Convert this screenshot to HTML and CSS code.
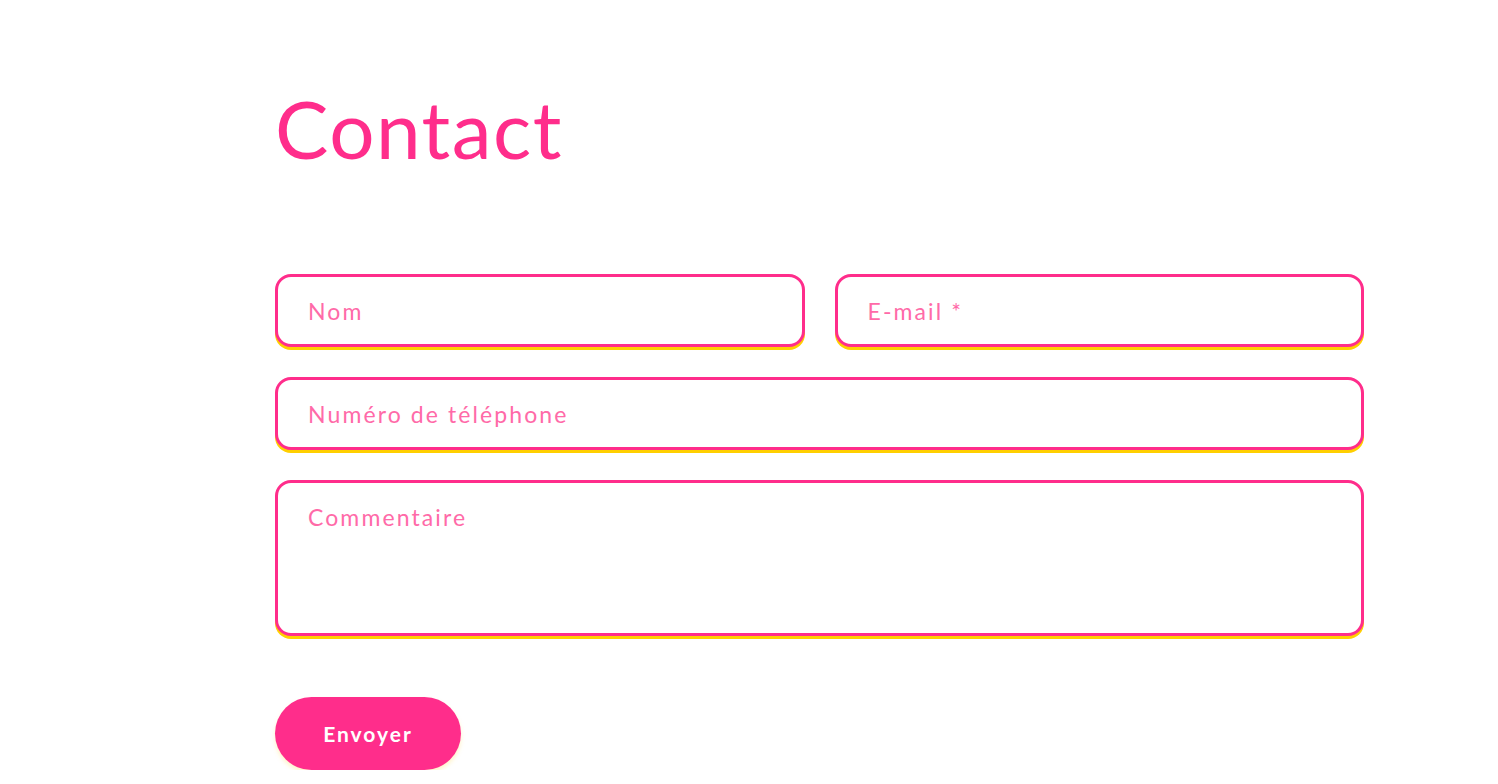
FILE: index.html
```html
<!DOCTYPE html>
<html lang="fr">
<head>
<meta charset="utf-8">
<title>Contact</title>
<link rel="stylesheet" href="styles.css">
</head>
<body>
<main class="page">
  <h1 class="title">Contact</h1>
  <form class="form">
    <div class="row two">
      <input class="field" type="text" placeholder="Nom">
      <input class="field" type="email" placeholder="E-mail *">
    </div>
    <div class="row">
      <input class="field" type="tel" placeholder="Numéro de téléphone">
    </div>
    <div class="row">
      <textarea class="field area" placeholder="Commentaire"></textarea>
    </div>
    <div class="actions">
      <button class="btn" type="button">Envoyer</button>
    </div>
  </form>
</main>
</body>
</html>
```
FILE: styles.css
```css
* { box-sizing: border-box; }
html, body { margin: 0; padding: 0; background: #fff; }
body { font-family: "Lato", "Noto Sans", sans-serif; }
.page {
  width: 1089px;
  margin-left: 275px;
  padding-top: 80px;
}
.title {
  margin: 0;
  font-family: "Lato", sans-serif;
  font-weight: 400;
  font-size: 80px;
  line-height: 96px;
  color: #ff2d8b;
  letter-spacing: 1.5px;
}
.form {
  margin-top: 98px;
  display: flex;
  flex-direction: column;
  gap: 30px;
}
.row { display: flex; }
.row.two { gap: 30px; }
.field {
  flex: 1;
  width: 100%;
  height: 73px;
  border: 3px solid #ff2d8b;
  border-radius: 16px;
  box-shadow: 0 3px 0 #ffcf00;
  background: #fff;
  padding: 0 30px;
  font-family: "Lato", sans-serif;
  font-size: 23px;
  letter-spacing: 2.1px;
  color: #ff2d8b;
  outline: none;
}
.field::placeholder { color: #ff6aa8; opacity: 1; }
.area {
  height: 156px;
  padding-top: 20px;
  resize: none;
}
.actions { margin-top: 30px; }
.btn {
  width: 186px;
  height: 73px;
  margin-top: 1px;
  border: none;
  border-radius: 37px;
  background: #ff2d8b;
  color: #fff;
  font-family: "Lato", sans-serif;
  font-weight: 700;
  font-size: 21px;
  letter-spacing: 2px;
  box-shadow: 0 3px 4px rgba(255, 220, 100, 0.35);
}
```
